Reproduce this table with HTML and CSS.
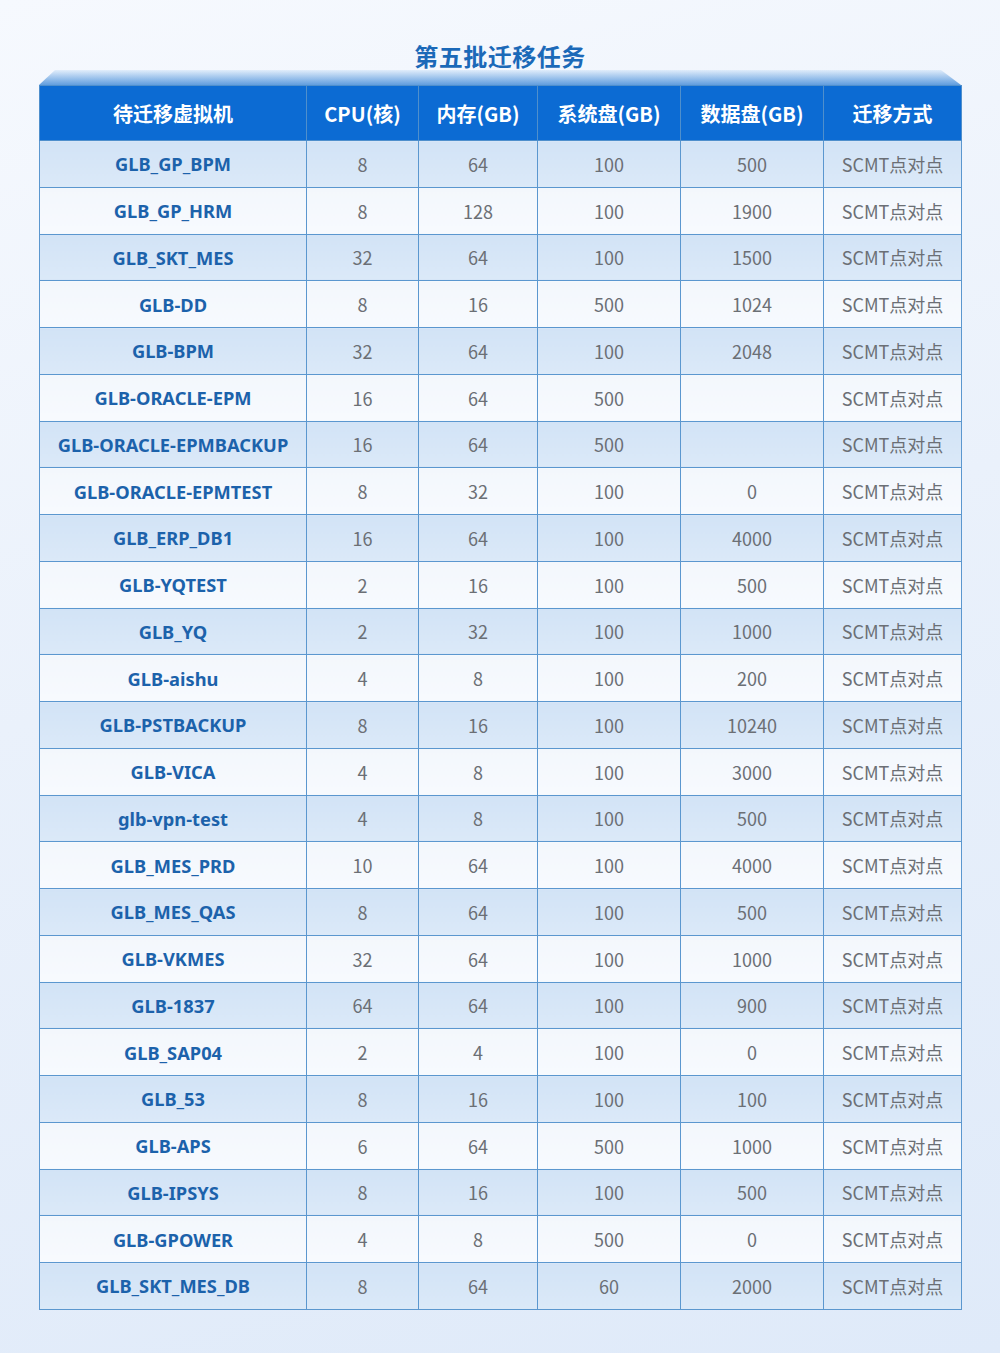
FILE: index.html
```html
<!DOCTYPE html>
<html lang="zh">
<head>
<meta charset="utf-8">
<title>第五批迁移任务</title>
<link rel="stylesheet" href="styles.css">
</head>
<body>
<div class="page">
  <h1 class="title">第五批迁移任务</h1>
  <div class="bevel"></div>
  <table class="grid">
    <colgroup>
      <col class="c1"><col class="c2"><col class="c3"><col class="c4"><col class="c5"><col class="c6">
    </colgroup>
    <thead>
      <tr><th>待迁移虚拟机</th><th>CPU(核)</th><th>内存(GB)</th><th>系统盘(GB)</th><th>数据盘(GB)</th><th>迁移方式</th></tr>
    </thead>
    <tbody>
      <tr><td class="name">GLB_GP_BPM</td><td>8</td><td>64</td><td>100</td><td>500</td><td>SCMT点对点</td></tr>
      <tr><td class="name">GLB_GP_HRM</td><td>8</td><td>128</td><td>100</td><td>1900</td><td>SCMT点对点</td></tr>
      <tr><td class="name">GLB_SKT_MES</td><td>32</td><td>64</td><td>100</td><td>1500</td><td>SCMT点对点</td></tr>
      <tr><td class="name">GLB-DD</td><td>8</td><td>16</td><td>500</td><td>1024</td><td>SCMT点对点</td></tr>
      <tr><td class="name">GLB-BPM</td><td>32</td><td>64</td><td>100</td><td>2048</td><td>SCMT点对点</td></tr>
      <tr><td class="name">GLB-ORACLE-EPM</td><td>16</td><td>64</td><td>500</td><td></td><td>SCMT点对点</td></tr>
      <tr><td class="name">GLB-ORACLE-EPMBACKUP</td><td>16</td><td>64</td><td>500</td><td></td><td>SCMT点对点</td></tr>
      <tr><td class="name">GLB-ORACLE-EPMTEST</td><td>8</td><td>32</td><td>100</td><td>0</td><td>SCMT点对点</td></tr>
      <tr><td class="name">GLB_ERP_DB1</td><td>16</td><td>64</td><td>100</td><td>4000</td><td>SCMT点对点</td></tr>
      <tr><td class="name">GLB-YQTEST</td><td>2</td><td>16</td><td>100</td><td>500</td><td>SCMT点对点</td></tr>
      <tr><td class="name">GLB_YQ</td><td>2</td><td>32</td><td>100</td><td>1000</td><td>SCMT点对点</td></tr>
      <tr><td class="name">GLB-aishu</td><td>4</td><td>8</td><td>100</td><td>200</td><td>SCMT点对点</td></tr>
      <tr><td class="name">GLB-PSTBACKUP</td><td>8</td><td>16</td><td>100</td><td>10240</td><td>SCMT点对点</td></tr>
      <tr><td class="name">GLB-VICA</td><td>4</td><td>8</td><td>100</td><td>3000</td><td>SCMT点对点</td></tr>
      <tr><td class="name">glb-vpn-test</td><td>4</td><td>8</td><td>100</td><td>500</td><td>SCMT点对点</td></tr>
      <tr><td class="name">GLB_MES_PRD</td><td>10</td><td>64</td><td>100</td><td>4000</td><td>SCMT点对点</td></tr>
      <tr><td class="name">GLB_MES_QAS</td><td>8</td><td>64</td><td>100</td><td>500</td><td>SCMT点对点</td></tr>
      <tr><td class="name">GLB-VKMES</td><td>32</td><td>64</td><td>100</td><td>1000</td><td>SCMT点对点</td></tr>
      <tr><td class="name">GLB-1837</td><td>64</td><td>64</td><td>100</td><td>900</td><td>SCMT点对点</td></tr>
      <tr><td class="name">GLB_SAP04</td><td>2</td><td>4</td><td>100</td><td>0</td><td>SCMT点对点</td></tr>
      <tr><td class="name">GLB_53</td><td>8</td><td>16</td><td>100</td><td>100</td><td>SCMT点对点</td></tr>
      <tr><td class="name">GLB-APS</td><td>6</td><td>64</td><td>500</td><td>1000</td><td>SCMT点对点</td></tr>
      <tr><td class="name">GLB-IPSYS</td><td>8</td><td>16</td><td>100</td><td>500</td><td>SCMT点对点</td></tr>
      <tr><td class="name">GLB-GPOWER</td><td>4</td><td>8</td><td>500</td><td>0</td><td>SCMT点对点</td></tr>
      <tr><td class="name">GLB_SKT_MES_DB</td><td>8</td><td>64</td><td>60</td><td>2000</td><td>SCMT点对点</td></tr>
    </tbody>
  </table>
</div>
</body>
</html>
```

FILE: styles.css
```css
html, body {
  margin: 0;
  padding: 0;
}
body {
  width: 1000px;
  height: 1353px;
  overflow: hidden;
  background: linear-gradient(165deg, #f6f9fe 0%, #eaf1fb 45%, #dfeaf9 100%);
  font-family: "Noto Sans CJK SC", "Noto Sans", sans-serif;
}
.page {
  padding: 42px 39px 0 39px;
}
.title {
  margin: 0;
  height: 28px;
  line-height: 28px;
  text-align: center;
  font-size: 24px;
  font-weight: 700;
  color: #1b69b8;
  letter-spacing: 0.5px;
}
.bevel {
  height: 15px;
  background: linear-gradient(to bottom, rgba(150, 196, 240, 0.2), rgba(60, 135, 215, 0.8));
  clip-path: polygon(16px 0, calc(100% - 20px) 0, 100% 100%, 0 100%);
}
.grid {
  width: 922px;
  table-layout: fixed;
  border-collapse: collapse;
  border: 1px solid #4f8fcc;
}
.c1 { width: 267px; }
.c2 { width: 112px; }
.c3 { width: 119px; }
.c4 { width: 143px; }
.c5 { width: 143px; }
.c6 { width: 138px; }
.grid th {
  height: 54px;
  padding: 0;
  background: #0c6bd3;
  color: #ffffff;
  font-size: 20px;
  font-weight: 700;
  border: 1px solid #4f8fcc;
  border-top: none;
  text-align: center;
}
.grid td {
  height: 45.76px;
  padding: 0;
  border: 1px solid #5b97cf;
  text-align: center;
  font-size: 18px;
  font-weight: 400;
  color: #6b6f75;
}
.grid tbody tr:nth-child(odd) td {
  background: linear-gradient(180deg, #d2e3f6, #dbe9f8);
}
.grid tbody tr:nth-child(even) td {
  background: linear-gradient(180deg, #f3f7fc, #f7fafe);
}
.grid td.name {
  font-family: "Noto Sans", "Noto Sans CJK SC", sans-serif;
  font-weight: 700;
  font-size: 18.3px;
  color: #1c62ab;
}
```
